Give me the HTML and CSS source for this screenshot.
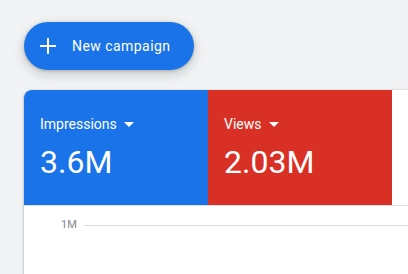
FILE: index.html
```html
<!DOCTYPE html>
<html>
<head>
<meta charset="utf-8">
<link rel="stylesheet" href="styles.css">
</head>
<body>
<div class="page">
  <button class="fab">
    <svg class="fab-icon" width="16" height="16" viewBox="0 0 16 16"><path d="M8 0v16M0 8h16" stroke="#fff" stroke-width="2" fill="none"/></svg>
    <span class="fab-label">New campaign</span>
  </button>
  <div class="card">
    <div class="tabs">
      <div class="tile tile-blue">
        <div class="tile-label">Impressions <svg class="caret" width="10" height="5" viewBox="0 0 10 5"><path d="M0 0h10L5 5z" fill="#fff"/></svg></div>
        <div class="tile-value">3.6M</div>
      </div>
      <div class="tile tile-red">
        <div class="tile-label">Views <svg class="caret" width="10" height="5" viewBox="0 0 10 5"><path d="M0 0h10L5 5z" fill="#fff"/></svg></div>
        <div class="tile-value">2.03M</div>
      </div>
    </div>
    <div class="chart">
      <div class="grid-row">
        <span class="axis-label">1M</span>
        <span class="grid-line"></span>
      </div>
    </div>
  </div>
</div>
</body>
</html>
```
FILE: styles.css
```css
html, body {
  margin: 0;
  padding: 0;
  background: #f1f3f4;
  overflow: hidden;
  font-family: Roboto, "Liberation Sans", sans-serif;
}
.page {
  padding: 22px 0 0 24px;
}
.fab {
  display: flex;
  align-items: center;
  width: 170px;
  height: 48px;
  border: none;
  border-radius: 24px;
  background: #1a73e8;
  color: #fff;
  padding: 0 0 0 16px;
  box-shadow: 0 1px 3px rgba(60,64,67,.3), 0 4px 8px 3px rgba(60,64,67,.15);
  font-family: Roboto, "Liberation Sans", sans-serif;
  cursor: pointer;
}
.fab-icon {
  display: block;
}
.fab-label {
  margin-left: 16px;
  font-size: 14px;
  font-weight: 400;
  letter-spacing: 0.45px;
  line-height: 20px;
}
.card {
  margin-top: 20px;
  background: #fff;
  border-radius: 8px 0 0 0;
  box-shadow: 0 1px 2px rgba(60,64,67,.3), 0 1px 3px 1px rgba(60,64,67,.15);
  height: 184px;
  overflow: hidden;
}
.tabs {
  display: flex;
  border-bottom: 1px solid #e0e0e0;
}
.tile {
  width: 184px;
  height: 115px;
  box-sizing: border-box;
  padding: 24px 16px 0 16px;
  color: #fff;
}
.tile-blue { background: #1a73e8; }
.tile-red { background: #d93025; }
.tile-label {
  font-size: 14px;
  line-height: 20px;
  display: flex;
  align-items: center;
}
.caret {
  margin-left: 7px;
  display: block;
}
.tile-value {
  margin-top: 8px;
  font-size: 32px;
  line-height: 40px;
}
.chart {
  padding-top: 12px;
}
.grid-row {
  display: flex;
  align-items: center;
  margin-left: 37px;
  height: 14px;
}
.axis-label {
  font-size: 11px;
  line-height: 14px;
  color: #80868b;
}
.grid-line {
  flex: 1;
  margin-left: 7px;
  height: 1px;
  background: #dadce0;
}
```
